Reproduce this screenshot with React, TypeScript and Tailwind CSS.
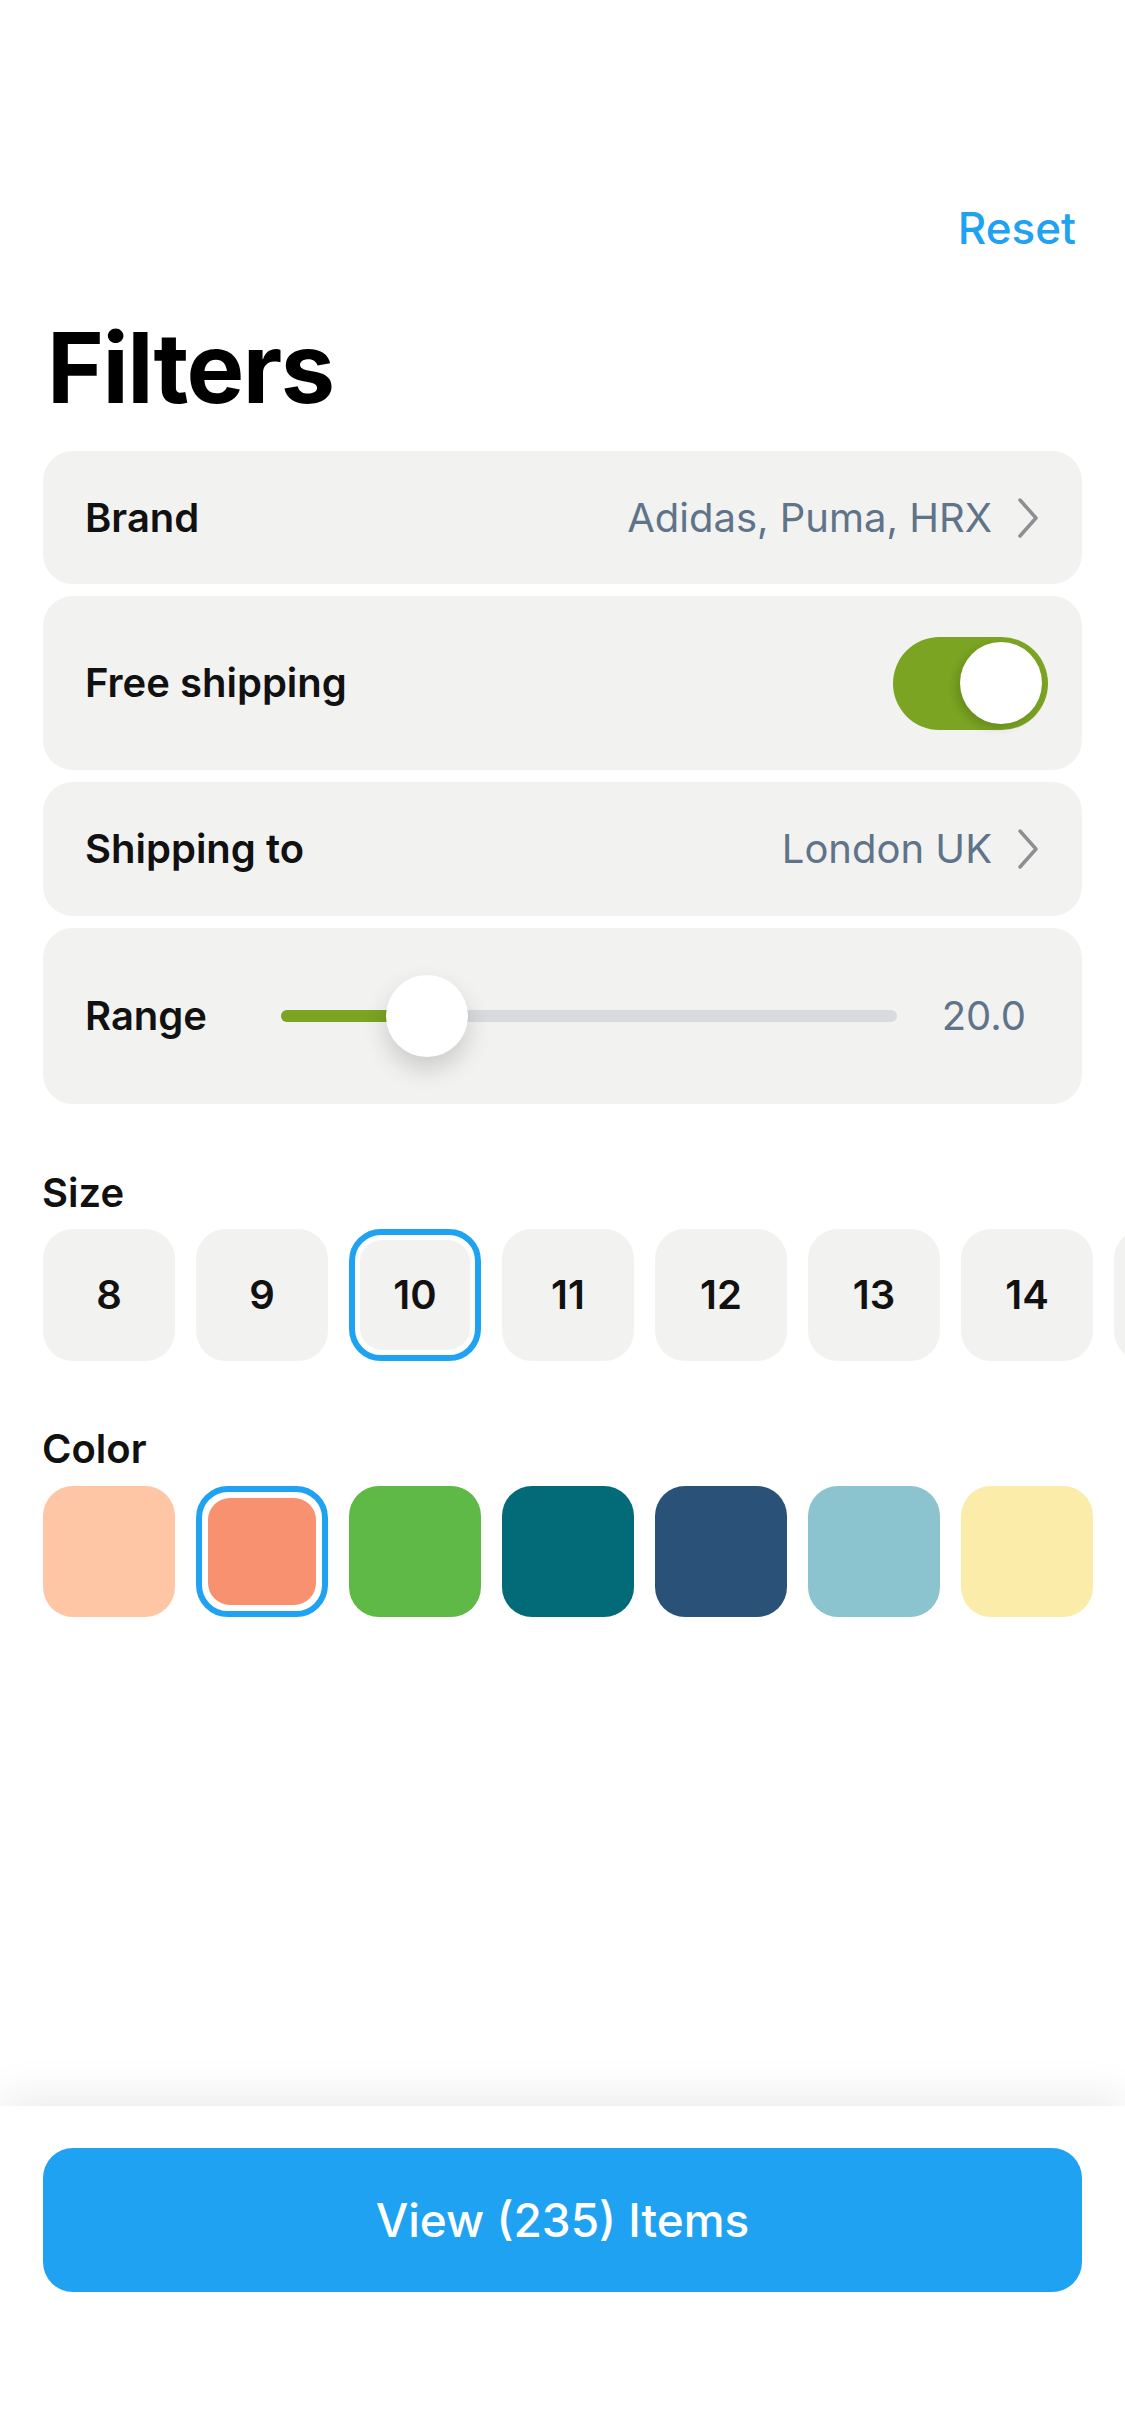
import React from 'react';

const sizes = ['8', '9', '10', '11', '12', '13', '14'];
const colors = ['#fec6a5', '#f7916f', '#5fb946', '#036b78', '#2a5279', '#8bc3cf', '#fbecaa'];

const Chevron = () => (
  <svg width="24" height="42" viewBox="0 0 24 42" fill="none">
    <polyline points="4,3 20,21 4,39" stroke="#8e8e93" strokeWidth="3.5" strokeLinecap="round" strokeLinejoin="round" />
  </svg>
);

const App = () => {
  return (
    <div className="flex h-[2436px] w-[1125px] flex-col overflow-hidden bg-white font-['Inter',sans-serif] text-[#111]">
      <div className="flex-1 overflow-hidden">
        {/* Header */}
        <div className="flex justify-end pr-[49px] pt-[196px]">
          <button className="text-[44px] font-medium leading-[64px] text-[#1fa2f2]">Reset</button>
        </div>
        <h1 className="mt-[53px] pl-[47px] text-[97px] font-bold leading-[110px] tracking-[-1.5px] text-black">Filters</h1>

        {/* Rows */}
        <div className="mt-[28px] flex flex-col gap-[12px] px-[43px]">
          <div className="flex h-[133px] items-center justify-between rounded-[30px] bg-[#f2f2f1] px-[42px]">
            <span className="text-[40px] font-semibold">Brand</span>
            <div className="flex items-center gap-[24px]">
              <span className="text-[40px] text-[#5f7389]">Adidas, Puma, HRX</span>
              <Chevron />
            </div>
          </div>

          <div className="flex h-[174px] items-center justify-between rounded-[30px] bg-[#f2f2f1] pl-[42px] pr-[34px]">
            <span className="text-[40px] font-semibold">Free shipping</span>
            <div className="flex h-[93px] w-[155px] items-center justify-end rounded-full bg-[#7aa422] p-[6px]">
              <div className="h-[82px] w-[82px] rounded-full bg-white shadow-[-4px_4px_10px_rgba(0,0,0,0.15)]" />
            </div>
          </div>

          <div className="flex h-[134px] items-center justify-between rounded-[30px] bg-[#f2f2f1] px-[42px]">
            <span className="text-[40px] font-semibold">Shipping to</span>
            <div className="flex items-center gap-[24px]">
              <span className="text-[40px] text-[#5f7389]">London UK</span>
              <Chevron />
            </div>
          </div>

          <div className="flex h-[176px] items-center rounded-[30px] bg-[#f2f2f1] pl-[42px] pr-[56px]">
            <span className="w-[196px] shrink-0 text-[40px] font-semibold">Range</span>
            <div className="relative h-[12px] w-[616px] rounded-full bg-[#d9dadd]">
              <div className="h-full w-[146px] rounded-full bg-[#7aa422]" />
              <div className="absolute left-[105px] top-1/2 h-[82px] w-[82px] -translate-y-1/2 rounded-full bg-white shadow-[0_12px_24px_rgba(0,0,0,0.16)]" />
            </div>
            <span className="ml-auto text-[40px] text-[#5f7389]">20.0</span>
          </div>
        </div>

        {/* Size */}
        <div className="mt-[65px] px-[42px] text-[40px] font-semibold leading-[48px]">Size</div>
        <div className="mt-[12px] flex gap-[21px] overflow-hidden px-[43px]">
          {sizes.map((s) =>
            s === '10' ? (
              <div key={s} className="h-[132px] w-[132px] shrink-0 rounded-[32px] border-[6px] border-[#1fa2f2] p-[5px]">
                <div className="flex h-full w-full items-center justify-center rounded-[22px] bg-[#f2f2f1] text-[40px] font-semibold">
                  {s}
                </div>
              </div>
            ) : (
              <div key={s} className="flex h-[132px] w-[132px] shrink-0 items-center justify-center rounded-[30px] bg-[#f2f2f1] text-[40px] font-semibold">
                {s}
              </div>
            )
          )}
          {/* next chip scrolled off screen */}
          <div className="h-[132px] w-[132px] shrink-0 rounded-[30px] bg-[#f2f2f1]" />
        </div>

        {/* Color */}
        <div className="mt-[64px] px-[42px] text-[40px] font-semibold leading-[48px]">Color</div>
        <div className="mt-[13px] flex gap-[21px] px-[43px]">
          {colors.map((c, i) =>
            i === 1 ? (
              <div key={c} className="h-[131px] w-[132px] shrink-0 rounded-[32px] border-[6px] border-[#1fa2f2] p-[6px]">
                <div className="h-full w-full rounded-[22px]" style={{ backgroundColor: c }} />
              </div>
            ) : (
              <div key={c} className="h-[131px] w-[132px] shrink-0 rounded-[30px]" style={{ backgroundColor: c }} />
            )
          )}
        </div>
      </div>

      {/* Bottom bar */}
      <div className="relative h-[330px] shrink-0 bg-white px-[43px] pt-[42px] shadow-[0_-10px_40px_rgba(0,0,0,0.08)]">
        <button className="flex h-[144px] w-full items-center justify-center rounded-[30px] bg-[#1fa2f2] text-[46px] font-medium text-white">
          View (235) Items
        </button>
      </div>
    </div>
  );
};

export default App;
